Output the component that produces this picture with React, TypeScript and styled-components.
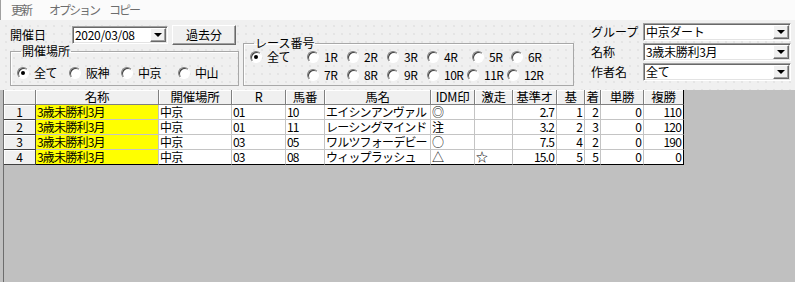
import React from "react";
import styled, { createGlobalStyle, css } from "styled-components";

const GlobalStyle = createGlobalStyle`
  html, body {
    margin: 0;
    padding: 0;
    background: #c0c0c0;
  }
  body {
    font-family: "Noto Sans CJK JP", "Liberation Sans", sans-serif;
    font-size: 12px;
    color: #000;
  }
  * {
    box-sizing: border-box;
  }
`;

const Window = styled.div`
  width: 795px;
  height: 282px;
  overflow: hidden;
  display: flex;
  flex-direction: column;
`;

const MenuBar = styled.div`
  height: 20px;
  display: flex;
  align-items: center;
  padding-left: 10px;
  background: #fbfbfb;
  border-left: 1px solid #a0a0a0;
`;

const MenuItem = styled.div<{ $w: number }>`
  width: ${(p) => p.$w}px;
  color: #6d6d6d;
  font-size: 12px;
  line-height: 16px;
  letter-spacing: -2px;
  white-space: nowrap;
`;

const Panel = styled.div`
  height: 70px;
  display: flex;
  padding-left: 10px;
  background-color: #f0f0f0;
  background-image: radial-gradient(circle, #d6d6d6 0.6px, transparent 0.8px);
  background-size: 8px 8px;
  background-position: 2px 2px;
`;

const LeftColumn = styled.div`
  width: 229px;
  display: flex;
  flex-direction: column;
  padding-top: 5px;
`;

const DateRow = styled.div`
  height: 20px;
  display: flex;
  align-items: center;
`;

const Label = styled.div<{ $w: number }>`
  width: ${(p) => p.$w}px;
  font-size: 12px;
  line-height: 16px;
  white-space: nowrap;
`;

const Combo = styled.div<{ $w: number }>`
  width: ${(p) => p.$w}px;
  height: 18px;
  display: flex;
  align-items: center;
  background: #fff;
  border: 1px solid;
  border-color: #a0a0a0 #fff #fff #a0a0a0;
  box-shadow: inset 1px 1px 0 #696969, inset -1px -1px 0 #e3e3e3;
  padding: 1px 1px 1px 2px;
`;

const ComboText = styled.div`
  flex: 1;
  font-size: 12px;
  line-height: 14px;
  letter-spacing: -0.3px;
  white-space: nowrap;
  overflow-x: clip;
`;

const DropButton = styled.div`
  width: 16px;
  height: 14px;
  flex: none;
  display: flex;
  align-items: center;
  justify-content: center;
  background: #f0f0f0;
  border: 1px solid;
  border-color: #fff #696969 #696969 #fff;
  box-shadow: inset -1px -1px 0 #a0a0a0;

  &::after {
    content: "";
    width: 0;
    height: 0;
    border-left: 4px solid transparent;
    border-right: 4px solid transparent;
    border-top: 4px solid #000;
  }
`;

const PushButton = styled.div`
  width: 64px;
  height: 20px;
  margin-left: 4px;
  display: flex;
  align-items: center;
  justify-content: center;
  background: #f0f0f0;
  border: 1px solid;
  border-color: #fff #696969 #696969 #fff;
  box-shadow: inset -1px -1px 0 #a0a0a0;
  font-size: 12px;
  line-height: 16px;
`;

const GroupBox = styled.fieldset<{ $top: number; $w?: number; $h: number; $left?: number }>`
  margin: ${(p) => p.$top}px 0 0 ${(p) => p.$left ?? 0}px;
  padding: 0 0 0 6px;
  height: ${(p) => p.$h}px;
  ${(p) =>
    p.$w
      ? css`
          width: ${p.$w}px;
        `
      : ""}
  border: 1px solid #a8a8a8;
  box-shadow: inset 1px 1px 0 #fff;
  min-width: 0;
`;

const Legend = styled.legend`
  padding: 0 1px;
  margin-left: 4px;
  font-size: 12px;
  line-height: 12px;
`;

const RadioRow = styled.div<{ $top: number; $lead?: number }>`
  display: flex;
  height: 14px;
  align-items: center;
  margin-top: ${(p) => p.$top}px;
  padding-left: ${(p) => p.$lead ?? 0}px;
`;

const RadioItem = styled.div<{ $w?: number }>`
  ${(p) =>
    p.$w
      ? css`
          width: ${p.$w}px;
        `
      : ""}
  flex: none;
  display: flex;
  align-items: center;
  gap: 5px;
  font-size: 12px;
  line-height: 14px;
  letter-spacing: -0.5px;
  white-space: nowrap;
`;

const RadioCircle = styled.span<{ $on?: boolean }>`
  width: 12px;
  height: 12px;
  flex: none;
  border-radius: 50%;
  background: #fff;
  border: 1px solid;
  border-color: #808080 #fff #fff #808080;
  box-shadow: inset 1px 1px 0 #404040;
  display: flex;
  align-items: center;
  justify-content: center;

  &::after {
    content: "";
    width: 4px;
    height: 4px;
    border-radius: 50%;
    background: ${(p) => (p.$on ? "#000" : "transparent")};
  }
`;

const RightForm = styled.div`
  margin-left: 17px;
  padding-top: 3px;
  display: flex;
  flex-direction: column;
  gap: 2px;
`;

const FormRow = styled.div`
  display: flex;
  align-items: center;
  height: 18px;
`;

const GridArea = styled.div`
  flex: 1;
  margin-left: 3px;
  border-left: 1px solid #6d6d6d;
  background: #c0c0c0;
`;

const cols = [32, 123, 73, 54, 39, 106, 44, 38, 44, 28, 16, 43, 40];

const Table = styled.div`
  display: grid;
  grid-template-columns: ${cols.map((c) => `${c}px`).join(" ")};
  grid-auto-rows: 15px;
  width: fit-content;
`;

const HeaderCell = styled.div<{ $last?: boolean }>`
  background: #f0f0f0;
  box-shadow: inset 1px 1px 0 #fff;
  border-right: 1px solid ${(p) => (p.$last ? "#000" : "#808080")};
  border-bottom: 1px solid #808080;
  text-align: center;
  font-size: 12.5px;
  line-height: 14px;
  letter-spacing: -0.3px;
  white-space: nowrap;
  overflow-x: clip;
`;

const RowHeader = styled.div`
  background: #f0f0f0;
  box-shadow: inset 1px 1px 0 #fff;
  border-right: 1px solid #404040;
  border-bottom: 1px solid #404040;
  text-align: center;
  font-size: 12px;
  line-height: 14px;
`;

const Cell = styled.div<{
  $right?: boolean;
  $yellow?: boolean;
  $last?: boolean;
  $bottom?: boolean;
}>`
  background: ${(p) => (p.$yellow ? "#ffff00" : "#fff")};
  border-right: 1px solid ${(p) => (p.$last ? "#000" : "#c4c4c4")};
  border-bottom: 1px solid ${(p) => (p.$bottom ? "#000" : "#c4c4c4")};
  text-align: ${(p) => (p.$right ? "right" : "left")};
  padding: 0 2px 0 1px;
  font-size: 12px;
  line-height: 14px;
  letter-spacing: -0.8px;
  white-space: nowrap;
  overflow-x: clip;
`;

const headers = ["", "名称", "開催場所", "R", "馬番", "馬名", "IDM印", "激走", "基準オ", "基", "着", "単勝", "複勝"];

const rows = [
  ["3歳未勝利3月", "中京", "01", "10", "エイシンアンヴァル", "◎", "", "2.7", "1", "2", "0", "110"],
  ["3歳未勝利3月", "中京", "01", "11", "レーシングマインド", "注", "", "3.2", "2", "3", "0", "120"],
  ["3歳未勝利3月", "中京", "03", "05", "ワルツフォーデビー", "○", "", "7.5", "4", "2", "0", "190"],
  ["3歳未勝利3月", "中京", "03", "08", "ウィップラッシュ", "△", "☆", "15.0", "5", "5", "0", "0"],
];

const Radio = ({ label, on, w }: { label: string; on?: boolean; w?: number }) => (
  <RadioItem $w={w}>
    <RadioCircle $on={on} />
    {label}
  </RadioItem>
);

const ComboBox = ({ value, w }: { value: string; w: number }) => (
  <Combo $w={w}>
    <ComboText>{value}</ComboText>
    <DropButton />
  </Combo>
);

export default function App() {
  return (
    <Window>
      <GlobalStyle />
      <MenuBar>
        <MenuItem $w={38}>更新</MenuItem>
        <MenuItem $w={60}>オプション</MenuItem>
        <MenuItem $w={40}>コピー</MenuItem>
      </MenuBar>
      <Panel>
        <LeftColumn>
          <DateRow>
            <Label $w={62}>開催日</Label>
            <ComboBox value="2020/03/08" w={96} />
            <PushButton>過去分</PushButton>
          </DateRow>
          <GroupBox $top={0} $h={41}>
            <Legend>開催場所</Legend>
            <RadioRow $top={9}>
              <Radio label="全て" on w={52} />
              <Radio label="阪神" w={52} />
              <Radio label="中京" w={57} />
              <Radio label="中山" />
            </RadioRow>
          </GroupBox>
        </LeftColumn>
        <GroupBox $top={17} $w={331} $h={49} $left={4}>
          <Legend>レース番号</Legend>
          <RadioRow $top={1}>
            <Radio label="全て" on w={57} />
            <Radio label="1R" w={40} />
            <Radio label="2R" w={40} />
            <Radio label="3R" w={40} />
            <Radio label="4R" w={45} />
            <Radio label="5R" w={39} />
            <Radio label="6R" />
          </RadioRow>
          <RadioRow $top={4} $lead={57}>
            <Radio label="7R" w={40} />
            <Radio label="8R" w={40} />
            <Radio label="9R" w={40} />
            <Radio label="10R" w={40} />
            <Radio label="11R" w={40} />
            <Radio label="12R" />
          </RadioRow>
        </GroupBox>
        <RightForm>
          <FormRow>
            <Label $w={52}>グループ</Label>
            <ComboBox value="中京ダート" w={148} />
          </FormRow>
          <FormRow>
            <Label $w={52}>名称</Label>
            <ComboBox value="3歳未勝利3月" w={148} />
          </FormRow>
          <FormRow>
            <Label $w={52}>作者名</Label>
            <ComboBox value="全て" w={148} />
          </FormRow>
        </RightForm>
      </Panel>
      <GridArea>
        <Table>
          {headers.map((h, i) => (
            <HeaderCell key={`h${i}`} $last={i === headers.length - 1}>
              {h}
            </HeaderCell>
          ))}
          {rows.map((r, ri) => (
            <React.Fragment key={ri}>
              <RowHeader>{ri + 1}</RowHeader>
              {r.map((v, ci) => (
                <Cell
                  key={ci}
                  $yellow={ci === 0}
                  $right={ci >= 7}
                  $last={ci === r.length - 1}
                  $bottom={ri === rows.length - 1}
                >
                  {v}
                </Cell>
              ))}
            </React.Fragment>
          ))}
        </Table>
      </GridArea>
    </Window>
  );
}
